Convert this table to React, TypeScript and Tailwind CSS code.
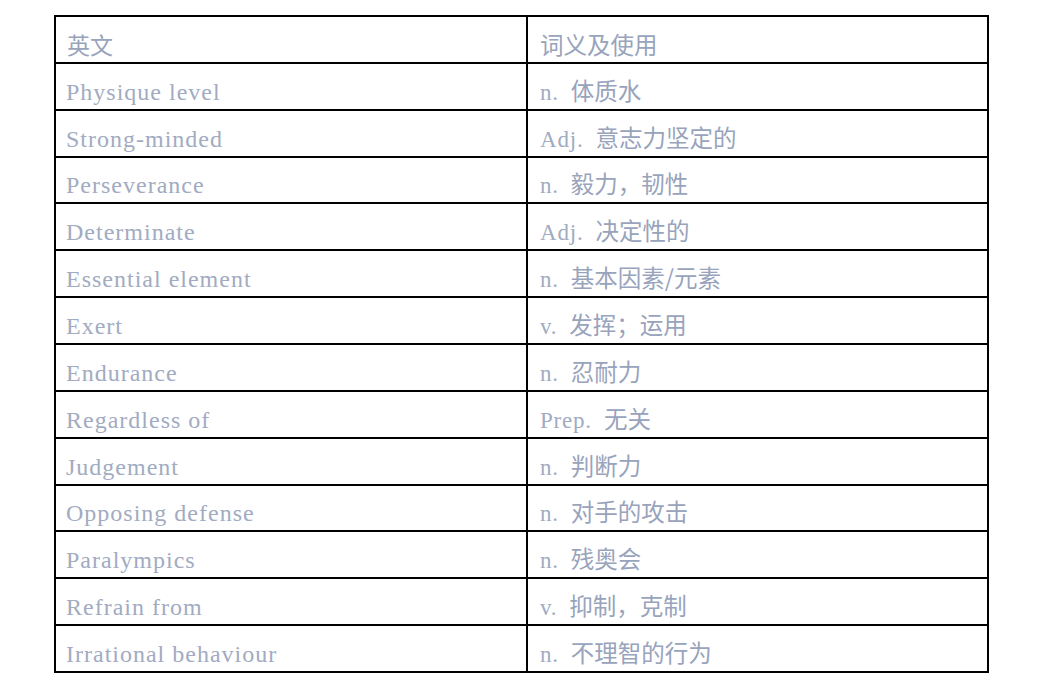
import React from "react";

const rows: [string, string, string][] = [
  ["Physique level", "n.", "体质水"],
  ["Strong-minded", "Adj.", "意志力坚定的"],
  ["Perseverance", "n.", "毅力，韧性"],
  ["Determinate", "Adj.", "决定性的"],
  ["Essential element", "n.", "基本因素/元素"],
  ["Exert", "v.", "发挥；运用"],
  ["Endurance", "n.", "忍耐力"],
  ["Regardless of", "Prep.", "无关"],
  ["Judgement", "n.", "判断力"],
  ["Opposing defense", "n.", "对手的攻击"],
  ["Paralympics", "n.", "残奥会"],
  ["Refrain from", "v.", "抑制，克制"],
  ["Irrational behaviour", "n.", "不理智的行为"],
];

const serif = "font-['Liberation_Serif','Noto_Sans_CJK_SC',serif]";
const cjk = "font-['Noto_Sans_CJK_SC',sans-serif]";

export default function App() {
  return (
    <div className="w-[1056px] h-[696px] bg-white pt-[15px] pl-[54px]">
      <div className="w-[935px] border-b-2 border-black">
        <div className="flex h-[46.86px] border-t-2 border-x-2 border-black">
          <div className="w-[472px] border-r-2 border-black flex items-end pl-[11px] pb-[3px]">
            <span className={`${cjk} text-[23px] text-[#98a3bc] leading-[30px]`}>英文</span>
          </div>
          <div className="flex-1 flex items-end pl-[12px] pb-[3px]">
            <span className={`${cjk} text-[23.5px] text-[#98a3bc] leading-[30px]`}>词义及使用</span>
          </div>
        </div>
        {rows.map(([en, pos, zh], i) => (
          <div key={i} className="flex h-[46.86px] border-t-2 border-x-2 border-black">
            <div className="w-[472px] border-r-2 border-black flex items-end pl-[10px] pb-[2px]">
              <span className={`${serif} text-[24px] tracking-[1px] text-[#a1abc1] leading-[30px]`}>{en}</span>
            </div>
            <div className="flex-1 flex items-end pl-[12px] pb-[1px]">
              <div className="flex items-baseline">
                <span className={`${serif} text-[23px] tracking-[0.8px] text-[#a1abc1] leading-[30px] mr-[12px]`}>{pos}</span>
                <span className={`${cjk} text-[23.5px] text-[#98a3bc] leading-[30px]`}>{zh}</span>
              </div>
            </div>
          </div>
        ))}
      </div>
    </div>
  );
}
